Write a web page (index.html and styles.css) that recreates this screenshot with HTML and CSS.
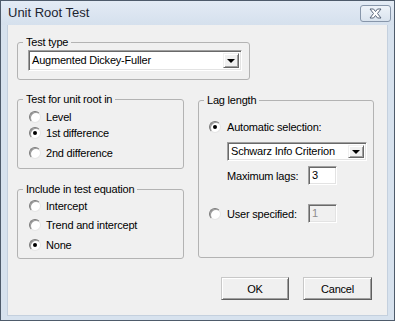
FILE: index.html
```html
<!DOCTYPE html>
<html lang="en">
<head>
    <meta charset="UTF-8">
    <title>Unit Root Test</title>
    <link rel="stylesheet" href="styles.css">
</head>
<body>
    <div class="window">
        <div class="titlebar">
            <span class="title">Unit Root Test</span>
            <span class="close">
                <svg width="17" height="11" viewBox="0 0 17 11">
                    <path d="M3 1 H6.5 L8.5 3.5 L10.5 1 H14 L10.5 5.5 L14 10 H10.5 L8.5 7.5 L6.5 10 H3 L6.5 5.5 Z" fill="#ffffff" stroke="#59667a" stroke-width="1" stroke-linejoin="round"/>
                </svg>
            </span>
        </div>

        <div class="client">
            <!-- Test type -->
            <div class="group group-type">
                <span class="group-title">Test type</span>
                <div class="combo combo-type">
                    <span class="combo-text">Augmented Dickey-Fuller</span>
                    <span class="combo-btn"><span class="arrow"></span></span>
                </div>
            </div>

            <div class="columns">
                <div class="col-left">
                    <!-- Test for unit root in -->
                    <div class="group group-root">
                        <span class="group-title">Test for unit root in</span>
                        <div class="radio-row row-1"><span class="radio"></span><span>Level</span></div>
                        <div class="radio-row row-2"><span class="radio checked"></span><span>1st difference</span></div>
                        <div class="radio-row row-3"><span class="radio"></span><span>2nd difference</span></div>
                    </div>

                    <!-- Include in test equation -->
                    <div class="group group-include">
                        <span class="group-title">Include in test equation</span>
                        <div class="radio-row inc-1"><span class="radio"></span><span>Intercept</span></div>
                        <div class="radio-row inc-2"><span class="radio"></span><span>Trend and intercept</span></div>
                        <div class="radio-row inc-3"><span class="radio checked"></span><span>None</span></div>
                    </div>
                </div>

                <!-- Lag length -->
                <div class="group group-lag">
                    <span class="group-title">Lag length</span>
                    <div class="radio-row lag-auto"><span class="radio checked"></span><span>Automatic selection:</span></div>
                    <div class="combo combo-lag">
                        <span class="combo-text">Schwarz Info Criterion</span>
                        <span class="combo-btn"><span class="arrow"></span></span>
                    </div>
                    <div class="field-row max-row">
                        <span class="field-label">Maximum lags:</span>
                        <span class="edit">3</span>
                    </div>
                    <div class="field-row user-row">
                        <span class="radio"></span>
                        <span class="field-label">User specified:</span>
                        <span class="edit disabled">1</span>
                    </div>
                </div>
            </div>

            <div class="buttons">
                <span class="btn btn-ok">OK</span>
                <span class="btn btn-cancel">Cancel</span>
            </div>
        </div>
    </div>
</body>
</html>
```

FILE: styles.css
```css
body {
    margin: 0;
    padding: 0;
    background: #ffffff;
    font-family: 'Liberation Sans', Arial, sans-serif;
    font-size: 11px;
    letter-spacing: -0.2px;
    color: #000;
}

.window {
    box-sizing: border-box;
    width: 395px;
    height: 321px;
    border: 1px solid #4e5b6b;
    background: #d7e2ee;
    display: flex;
    flex-direction: column;
}

/* Barra de titulo */
.titlebar {
    height: 24px;
    flex-shrink: 0;
    display: flex;
    align-items: flex-start;
    justify-content: space-between;
    background: linear-gradient(#e3ebf5, #d5e0ed);
}

.title {
    font-size: 13px;
    letter-spacing: 0;
    line-height: 24px;
    margin-left: 7px;
    color: #1c2430;
}

.close {
    box-sizing: border-box;
    width: 31px;
    height: 17px;
    margin: 4px 3px 0 0;
    border: 1px solid #8796aa;
    border-radius: 3px;
    background: linear-gradient(#eef3f9, #d9e3ee);
    display: flex;
    align-items: center;
    justify-content: center;
}

.client {
    flex: 1;
    margin: 0 6px 4px 6px;
    padding-left: 10px;
    background: #f0f0f0;
    border: 1px solid #c4d0de;
    border-top: none;
    display: flex;
    flex-direction: column;
}

/* Cajas de grupo */
.group {
    box-sizing: border-box;
    border: 1px solid #b3b3b3;
    border-radius: 3px;
    display: flex;
    flex-direction: column;
    align-items: flex-start;
}

.group-title {
    margin: -7px 0 0 -5px;
    padding: 0 3px;
    line-height: 13px;
    background: #f0f0f0;
}

.group-type {
    width: 233px;
    margin-top: 17px;
    margin-left: -1px;
    padding: 0 7px 8px 10px;
}

.columns {
    display: flex;
    align-items: flex-start;
    gap: 14px;
    margin-top: 19px;
    margin-left: -1px;
}

.col-left {
    width: 167px;
    display: flex;
    flex-direction: column;
}

.group-root {
    padding: 0 0 7px 11px;
}

.group-include {
    margin-top: 20px;
    padding: 0 0 5px 11px;
}

.group-root .group-title,
.group-include .group-title {
    margin-left: -6px;
}

.group-lag {
    width: 176px;
    height: 158px;
    margin-top: 1px;
    padding: 0 0 0 10px;
}

/* Radios */
.radio-row {
    height: 16px;
    display: flex;
    align-items: center;
}

.radio {
    box-sizing: border-box;
    width: 12px;
    height: 12px;
    border-radius: 50%;
    border: 1px solid;
    border-color: #7a7a7a #e6e6e6 #e6e6e6 #7a7a7a;
    background: radial-gradient(circle at 60% 60%, #ffffff 55%, #e8e8e8);
    box-shadow: inset 1px 1px 0 #9a9a9a;
    margin-right: 5px;
    display: flex;
    align-items: center;
    justify-content: center;
    flex-shrink: 0;
}

.radio.checked::after {
    content: "";
    width: 4px;
    height: 4px;
    border-radius: 50%;
    background: #000;
}

.row-1 { margin-top: 3px; }
.row-2 { margin-top: 0; }
.row-3 { margin-top: 4px; }

.inc-1 { margin-top: 2px; }
.inc-2 { margin-top: 3px; }
.inc-3 { margin-top: 4px; }

.lag-auto {
    margin-top: 12px;
}

.lag-auto .radio,
.user-row .radio {
    margin-right: 6px;
}

/* Combos */
.combo {
    box-sizing: border-box;
    display: flex;
    align-items: stretch;
    background: #fff;
    border: 1px solid;
    border-color: #a0a0a0 #ffffff #ffffff #a0a0a0;
    box-shadow: inset 1px 1px 0 #696969, inset -1px -1px 0 #e3e3e3;
    padding: 2px;
}

.combo-type {
    width: 214px;
    height: 21px;
    margin-top: 1px;
}

.combo-lag {
    width: 140px;
    height: 19px;
    margin-top: 7px;
    margin-left: 18px;
}

.combo-text {
    flex: 1;
    padding-left: 1px;
    line-height: 15px;
    white-space: nowrap;
    overflow: hidden;
}

.combo-lag .combo-text {
    line-height: 13px;
}

.combo-btn {
    box-sizing: border-box;
    width: 16px;
    background: #f0f0f0;
    border: 1px solid;
    border-color: #f0f0f0 #696969 #696969 #f0f0f0;
    box-shadow: inset 1px 1px 0 #fff, inset -1px -1px 0 #a0a0a0;
    display: flex;
    align-items: center;
    justify-content: center;
}

.arrow {
    width: 0;
    height: 0;
    border-left: 4px solid transparent;
    border-right: 4px solid transparent;
    border-top: 4px solid #000;
    margin-top: 1px;
}

/* Campos */
.field-row {
    display: flex;
    align-items: center;
}

.max-row {
    margin-top: 5px;
    margin-left: 18px;
}

.user-row {
    margin-top: 19px;
}

.field-label {
    width: 81px;
}

.edit {
    box-sizing: border-box;
    width: 29px;
    height: 19px;
    background: #fff;
    border: 1px solid;
    border-color: #a0a0a0 #ffffff #ffffff #a0a0a0;
    box-shadow: inset 1px 1px 0 #696969, inset -1px -1px 0 #e3e3e3;
    padding: 2px 0 0 3px;
    line-height: 13px;
}

.edit.disabled {
    background: #f0f0f0;
    color: #8d8d8d;
}

/* Botones */
.buttons {
    display: flex;
    justify-content: flex-end;
    gap: 14px;
    margin-top: 18px;
    padding-right: 15px;
}

.btn {
    box-sizing: border-box;
    height: 23px;
    display: flex;
    align-items: center;
    justify-content: center;
    background: #f0f0f0;
    border: 1px solid;
    border-color: #c8c8c8 #5f5f5f #5f5f5f #c8c8c8;
    box-shadow: inset 1px 1px 0 #fff, inset -1px -1px 0 #a0a0a0;
}

.btn-ok {
    width: 68px;
}

.btn-cancel {
    width: 69px;
}
```
